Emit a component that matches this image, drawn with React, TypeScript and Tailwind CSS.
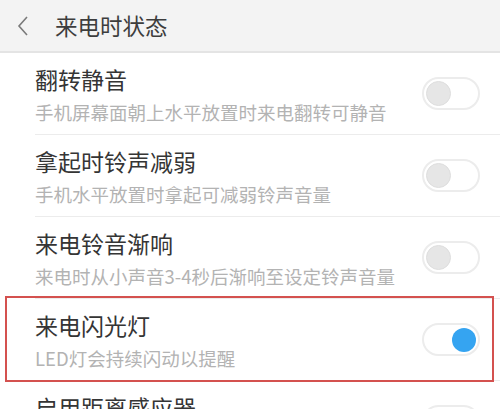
import React from 'react';

type Item = { title: string; sub: string; on?: boolean; marked?: boolean };

const items: Item[] = [
  { title: '翻转静音', sub: '手机屏幕面朝上水平放置时来电翻转可静音' },
  { title: '拿起时铃声减弱', sub: '手机水平放置时拿起可减弱铃声音量' },
  { title: '来电铃音渐响', sub: '来电时从小声音3-4秒后渐响至设定铃声音量' },
  { title: '来电闪光灯', sub: 'LED灯会持续闪动以提醒', on: true, marked: true },
  { title: '启用距离感应器', sub: '通话时靠近面部自动熄屏' },
];

const Toggle = ({ on }: { on?: boolean }) => (
  <div className="w-[58px] h-[33px] rounded-full border-2 border-[#ececec] bg-white flex items-center px-[2px] shrink-0">
    {on ? (
      <div className="ml-auto w-[24px] h-[24px] rounded-full bg-[#35a4f1]" />
    ) : (
      <div className="w-[25px] h-[25px] rounded-full bg-[#e6e6e6] border border-[#dedede]" />
    )}
  </div>
);

const Row = ({ item }: { item: Item }) => (
  <div className="relative">
    <div className="ml-[35px] pr-5 flex items-center border-b border-[#ececec]">
      <div className="flex-1 flex flex-col pt-3 pb-[11px]">
        <div className="text-[23px] leading-[28px] text-[#353535]">{item.title}</div>
        <div className="mt-2 text-[18.5px] leading-[22px] text-[#b3b3b3]">{item.sub}</div>
      </div>
      <Toggle on={item.on} />
    </div>
    {item.marked && (
      <div className="absolute left-[5px] right-[6px] -top-[3px] -bottom-[1px] border-2 border-[#d4514f] pointer-events-none" />
    )}
  </div>
);

export default function App() {
  return (
    <div
      className="w-[500px] h-[409px] overflow-hidden bg-white"
      style={{ fontFamily: '"Noto Sans CJK SC", "Noto Sans", sans-serif' }}
    >
      {/* Header */}
      <div className="h-[53px] bg-[#f3f3f3] border-b-2 border-[#e4e4e4] flex items-center">
        <svg width="14" height="22" viewBox="0 0 14 22" className="ml-[16px]">
          <path d="M11 2 L3 11 L11 20" fill="none" stroke="#7a7a7a" strokeWidth="1.6" />
        </svg>
        <div className="ml-[25px] text-[22.5px] text-[#3d3d3d]">来电时状态</div>
      </div>

      {items.map(item => (
        <Row key={item.title} item={item} />
      ))}
    </div>
  );
}
